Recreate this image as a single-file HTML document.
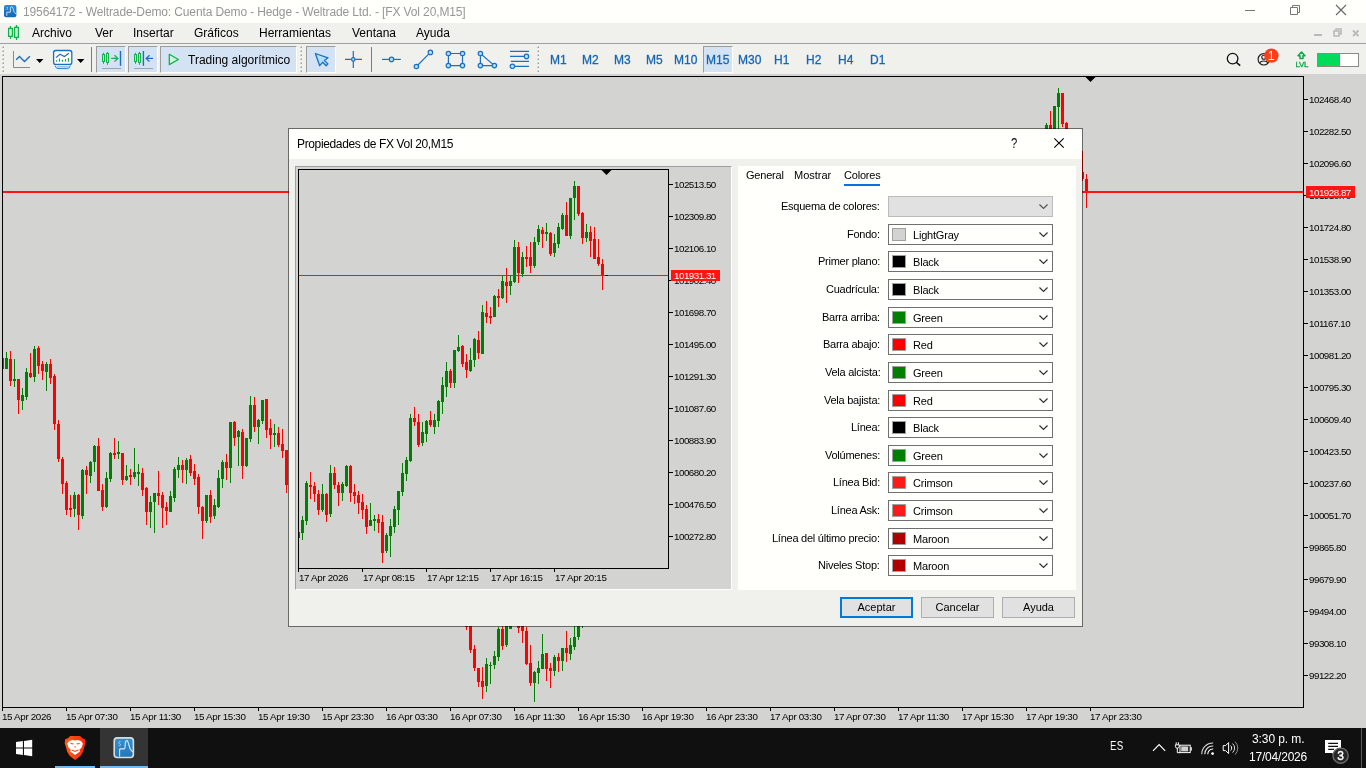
<!DOCTYPE html>
<html lang="es"><head><meta charset="utf-8"><title>MetaTrader 5</title>
<style>
*{margin:0;padding:0;box-sizing:border-box}
html,body{width:1366px;height:768px;overflow:hidden;background:#d3d3d1;font-family:"Liberation Sans",sans-serif;font-size:12px;color:#000}
body{position:relative}
i{display:block;font-style:normal}
.abs,#titlebar,#menubar,#toolbar,#chart,#dlg,#taskbar,#chart *,#dlg *,#taskbar *,#titlebar *,#menubar *,#toolbar *{position:absolute}
span{white-space:nowrap;line-height:1}
svg{display:block;overflow:visible}
#titlebar{left:0;top:0;width:1366px;height:23px;background:#fffffb}
#titlebar .tt{left:23px;top:6px;font-size:12px;color:#969696;letter-spacing:-0.125px}
#menubar{left:0;top:23px;width:1366px;height:20px;background:#f0f0ed}
#menubar span{top:4px;font-size:12px}
#sep1{position:absolute;left:0;top:43px;width:1366px;height:1px;background:#a0a0a0}
#toolbar{left:0;top:44px;width:1366px;height:30px;background:#f0f0ed}
#toolbar .hl{background:#d3e3f3;top:2px;height:27px;border:1px solid #fff;border-left-color:#9c9c9c;border-top-color:#9c9c9c}
#toolbar .tf{top:10px;font-size:12px;color:#1766b5;-webkit-text-stroke:0.3px #1766b5;margin-left:-0.6px}
#toolbar .grip{width:3px;top:3px;height:24px;background:repeating-linear-gradient(#f0f0ed 0 2px,#b8b8b8 2px 4px);opacity:.9}
#toolbar .vs{width:1px;top:3px;height:24px;background:#8a8a8a}
#chart{left:0;top:74px;width:1366px;height:654px;background:#d3d3d1;overflow:hidden}
/* chart children coordinates are page coords shifted by -74 via wrapper */
#cw{left:0;top:-74px;width:1366px;height:768px}
.tk{width:4px;height:1px;background:#000}
.tv{width:1px;height:3px;background:#000}
.pl,.tl{font-size:9.8px;letter-spacing:-0.5px;color:#000}
.tl{letter-spacing:-0.33px}
#dlg{left:288px;top:128px;width:795px;height:499px;background:#f0f0ed;background-clip:padding-box;border:1px solid rgba(0,0,0,.5);overflow:hidden}
#dw{left:-289px;top:-129px;width:1366px;height:768px}
#dtitle{left:289px;top:129px;width:793px;height:30px;background:#fffffb}
#dtitle .t{left:9px;top:9px;font-size:12px;letter-spacing:-0.36px}
#pvframe{left:295px;top:166px;width:437px;height:424px;background:#d3d3d1;border:1px solid #fff;border-top-color:#a0a0a0;border-left-color:#a0a0a0}
#pvbox{left:298px;top:169px;width:371px;height:400px;border:1px solid #000}
#panel{left:738px;top:166px;width:338px;height:424px;background:#fffffb}
.tab{top:170px;font-size:11px}
.lb{right:486px;font-size:11px;line-height:14px;letter-spacing:-0.25px}
.cb{left:888px;width:165px;height:21px;border:1px solid #707070;background:#fffffb}
.cb.dis{background:#e1e1e1;border-color:#bcbcbc}
.cb .sw{left:3px;top:3px;width:14px;height:13px;border:1px solid #a0a0a0}
.cb .cv{left:24px;top:5px;font-size:11px;letter-spacing:-0.2px}
.cb .chv{right:4px;top:7px;width:9px;height:5.4px}
.btn{top:597px;width:73px;height:21px;border:1px solid #adadad;background:#e1e1e1;font-size:11px;text-align:center;line-height:19px}
#taskbar{left:0;top:728px;width:1366px;height:40px;background:#101010}
#taskbar span{color:#fff}
span,text,.btn{will-change:transform}

</style></head>
<body>
<div id="titlebar">
<span class="tt">19564172 - Weltrade-Demo: Cuenta Demo - Hedge - Weltrade Ltd. - [FX Vol 20,M15]</span>
</div>
<div id="menubar">
<span style="left:32px">Archivo</span><span style="left:95px">Ver</span><span style="left:133px">Insertar</span><span style="left:194px">Gráficos</span><span style="left:259px">Herramientas</span><span style="left:352px">Ventana</span><span style="left:416px">Ayuda</span>
</div>
<div id="sep1"></div>
<div id="toolbar">
<i class="hl" style="left:96px;width:30px"></i><i class="hl" style="left:128px;width:30px"></i><i class="hl" style="left:160px;width:137px"></i><i class="hl" style="left:306px;width:30px"></i><i class="hl" style="left:703px;width:30px"></i>
<span style="left:188px;top:10px;font-size:12px">Trading algorítmico</span>
<span class="tf" style="left:551px">M1</span><span class="tf" style="left:583px">M2</span><span class="tf" style="left:615px">M3</span><span class="tf" style="left:647px">M5</span><span class="tf" style="left:675px">M10</span><span class="tf" style="left:707px">M15</span><span class="tf" style="left:739px">M30</span><span class="tf" style="left:775px">H1</span><span class="tf" style="left:807px">H2</span><span class="tf" style="left:839px">H4</span><span class="tf" style="left:871px">D1</span>
</div>
<svg id="topsvg" style="position:absolute;left:0;top:0" width="1366" height="76" viewBox="0 0 1366 76">
<defs><linearGradient id="gi" x1="0" y1="0" x2="0" y2="1"><stop offset="0" stop-color="#2a8ad6"/><stop offset="1" stop-color="#1666b0"/></linearGradient></defs>
<rect x="4" y="5" width="12.4" height="12.2" rx="2" fill="url(#gi)"/>
<path d="M6.8 15.8V12.2H10.4V8.6Q10.4 6.6 11.6 6.6Q12.6 6.6 13 8.4L14 11.6L16 14" fill="none" stroke="#d5e4f2" stroke-width="0.9"/>
<path d="M7.2 7V9.6M6.6 7.4H7.8M6.6 9.2H7.8" stroke="#d5e4f2" stroke-width="0.5" fill="none"/>
<path d="M1245 10.5H1255" stroke="#777" stroke-width="1"/>
<path d="M1290.5 7.5H1297.5V14.5H1290.5ZM1292.5 7.5V5.5H1299.5V12.5H1297.5" fill="none" stroke="#777" stroke-width="1"/>
<path d="M1336 5L1346 15M1346 5L1336 15" stroke="#666" stroke-width="1.1"/>
<rect x="1314" y="34" width="8" height="2" fill="#b9b9b9"/>
<path d="M1334 31H1339V36H1334ZM1336 30.5V29H1341V34H1339.5" fill="none" stroke="#b9b9b9" stroke-width="1.6"/>
<path d="M1353 30.5L1358.5 36M1358.5 30.5L1353 36" stroke="#b9b9b9" stroke-width="1.8"/>
<path d="M10.5 26V39M16.5 25V40" stroke="#14b04a" stroke-width="1.3"/>
<rect x="8.6" y="28.4" width="3.8" height="8" fill="#c6f7dc" stroke="#14b04a" stroke-width="1.3"/>
<rect x="14.6" y="27.4" width="3.8" height="10" fill="#c6f7dc" stroke="#14b04a" stroke-width="1.3"/>
<rect x="2" y="46" width="1" height="1" fill="#e6e6e2"/><rect x="3" y="46" width="1" height="1" fill="#c6c6c2"/><rect x="2" y="47" width="1" height="1" fill="#c6c6c2"/><rect x="3" y="47" width="1" height="1" fill="#a0a09c"/><rect x="2" y="50" width="1" height="1" fill="#e6e6e2"/><rect x="3" y="50" width="1" height="1" fill="#c6c6c2"/><rect x="2" y="51" width="1" height="1" fill="#c6c6c2"/><rect x="3" y="51" width="1" height="1" fill="#a0a09c"/><rect x="2" y="54" width="1" height="1" fill="#e6e6e2"/><rect x="3" y="54" width="1" height="1" fill="#c6c6c2"/><rect x="2" y="55" width="1" height="1" fill="#c6c6c2"/><rect x="3" y="55" width="1" height="1" fill="#a0a09c"/><rect x="2" y="58" width="1" height="1" fill="#e6e6e2"/><rect x="3" y="58" width="1" height="1" fill="#c6c6c2"/><rect x="2" y="59" width="1" height="1" fill="#c6c6c2"/><rect x="3" y="59" width="1" height="1" fill="#a0a09c"/><rect x="2" y="62" width="1" height="1" fill="#e6e6e2"/><rect x="3" y="62" width="1" height="1" fill="#c6c6c2"/><rect x="2" y="63" width="1" height="1" fill="#c6c6c2"/><rect x="3" y="63" width="1" height="1" fill="#a0a09c"/><rect x="2" y="66" width="1" height="1" fill="#e6e6e2"/><rect x="3" y="66" width="1" height="1" fill="#c6c6c2"/><rect x="2" y="67" width="1" height="1" fill="#c6c6c2"/><rect x="3" y="67" width="1" height="1" fill="#a0a09c"/><rect x="2" y="70" width="1" height="1" fill="#e6e6e2"/><rect x="3" y="70" width="1" height="1" fill="#c6c6c2"/><rect x="2" y="71" width="1" height="1" fill="#c6c6c2"/><rect x="3" y="71" width="1" height="1" fill="#a0a09c"/>
<rect x="300" y="46" width="1" height="1" fill="#e6e6e2"/><rect x="301" y="46" width="1" height="1" fill="#c6c6c2"/><rect x="300" y="47" width="1" height="1" fill="#c6c6c2"/><rect x="301" y="47" width="1" height="1" fill="#a0a09c"/><rect x="300" y="50" width="1" height="1" fill="#e6e6e2"/><rect x="301" y="50" width="1" height="1" fill="#c6c6c2"/><rect x="300" y="51" width="1" height="1" fill="#c6c6c2"/><rect x="301" y="51" width="1" height="1" fill="#a0a09c"/><rect x="300" y="54" width="1" height="1" fill="#e6e6e2"/><rect x="301" y="54" width="1" height="1" fill="#c6c6c2"/><rect x="300" y="55" width="1" height="1" fill="#c6c6c2"/><rect x="301" y="55" width="1" height="1" fill="#a0a09c"/><rect x="300" y="58" width="1" height="1" fill="#e6e6e2"/><rect x="301" y="58" width="1" height="1" fill="#c6c6c2"/><rect x="300" y="59" width="1" height="1" fill="#c6c6c2"/><rect x="301" y="59" width="1" height="1" fill="#a0a09c"/><rect x="300" y="62" width="1" height="1" fill="#e6e6e2"/><rect x="301" y="62" width="1" height="1" fill="#c6c6c2"/><rect x="300" y="63" width="1" height="1" fill="#c6c6c2"/><rect x="301" y="63" width="1" height="1" fill="#a0a09c"/><rect x="300" y="66" width="1" height="1" fill="#e6e6e2"/><rect x="301" y="66" width="1" height="1" fill="#c6c6c2"/><rect x="300" y="67" width="1" height="1" fill="#c6c6c2"/><rect x="301" y="67" width="1" height="1" fill="#a0a09c"/><rect x="300" y="70" width="1" height="1" fill="#e6e6e2"/><rect x="301" y="70" width="1" height="1" fill="#c6c6c2"/><rect x="300" y="71" width="1" height="1" fill="#c6c6c2"/><rect x="301" y="71" width="1" height="1" fill="#a0a09c"/>
<rect x="537" y="46" width="1" height="1" fill="#e6e6e2"/><rect x="538" y="46" width="1" height="1" fill="#c6c6c2"/><rect x="537" y="47" width="1" height="1" fill="#c6c6c2"/><rect x="538" y="47" width="1" height="1" fill="#a0a09c"/><rect x="537" y="50" width="1" height="1" fill="#e6e6e2"/><rect x="538" y="50" width="1" height="1" fill="#c6c6c2"/><rect x="537" y="51" width="1" height="1" fill="#c6c6c2"/><rect x="538" y="51" width="1" height="1" fill="#a0a09c"/><rect x="537" y="54" width="1" height="1" fill="#e6e6e2"/><rect x="538" y="54" width="1" height="1" fill="#c6c6c2"/><rect x="537" y="55" width="1" height="1" fill="#c6c6c2"/><rect x="538" y="55" width="1" height="1" fill="#a0a09c"/><rect x="537" y="58" width="1" height="1" fill="#e6e6e2"/><rect x="538" y="58" width="1" height="1" fill="#c6c6c2"/><rect x="537" y="59" width="1" height="1" fill="#c6c6c2"/><rect x="538" y="59" width="1" height="1" fill="#a0a09c"/><rect x="537" y="62" width="1" height="1" fill="#e6e6e2"/><rect x="538" y="62" width="1" height="1" fill="#c6c6c2"/><rect x="537" y="63" width="1" height="1" fill="#c6c6c2"/><rect x="538" y="63" width="1" height="1" fill="#a0a09c"/><rect x="537" y="66" width="1" height="1" fill="#e6e6e2"/><rect x="538" y="66" width="1" height="1" fill="#c6c6c2"/><rect x="537" y="67" width="1" height="1" fill="#c6c6c2"/><rect x="538" y="67" width="1" height="1" fill="#a0a09c"/><rect x="537" y="70" width="1" height="1" fill="#e6e6e2"/><rect x="538" y="70" width="1" height="1" fill="#c6c6c2"/><rect x="537" y="71" width="1" height="1" fill="#c6c6c2"/><rect x="538" y="71" width="1" height="1" fill="#a0a09c"/>
<path d="M13.5 51V67.5H30" fill="none" stroke="#8a8a8a" stroke-width="1"/>
<path d="M16.2 59.8L19.5 56.4L24.5 61.6L29.9 56.3" fill="none" stroke="#1b6fc2" stroke-width="1.4"/>
<path d="M36 59H43.4L39.7 63Z" fill="#000"/>
<rect x="53.6" y="50.5" width="18.2" height="14" rx="2.2" fill="#fff" stroke="#1b6fc2" stroke-width="1.3"/>
<path d="M55.2 65.6Q55.6 68.5 58 68.6H67.4Q69.8 68.5 70.2 65.6" fill="#fff" stroke="#1b6fc2" stroke-width="0.9"/><path d="M56.8 66.9H68.6" stroke="#1b6fc2" stroke-width="0.7"/>
<path d="M56 57.6L60 54.2L64.4 56.5L68.9 53.2" fill="none" stroke="#1b6fc2" stroke-width="1.2"/>
<path d="M56.5 61.8V60.2M59.5 61.8V58.4M62.4 61.8V59.8M65.5 61.8V59M68.4 61.8V58" stroke="#14b04a" stroke-width="1.2"/>
<path d="M77 59H84.4L80.7 63Z" fill="#000"/>
<rect x="91" y="47" width="1" height="25" fill="#7d7d7d"/><rect x="371" y="47" width="1" height="25" fill="#7d7d7d"/>
<path d="M103.5 52.8V63.8M107.5 51.9V64.9" stroke="#14b04a" stroke-width="1"/><rect x="102.5" y="54.5" width="2" height="7" fill="#c6f7dc" stroke="#14b04a" stroke-width="1"/><rect x="106.5" y="53.5" width="2" height="9" fill="#c6f7dc" stroke="#14b04a" stroke-width="1"/>
<path d="M111.2 58.4H117.6M114.5 55.2L117.8 58.4L114.5 61.6" fill="none" stroke="#14b04a" stroke-width="1.3"/>
<path d="M120.5 51V65.8" stroke="#1b6fc2" stroke-width="1.4"/>
<path d="M102 68.5H121" stroke="#a3a3a3" stroke-width="1"/>
<path d="M135.5 52.8V63.8M139.5 51.9V64.9" stroke="#14b04a" stroke-width="1"/><rect x="134.5" y="54.5" width="2" height="7" fill="#c6f7dc" stroke="#14b04a" stroke-width="1"/><rect x="138.5" y="53.5" width="2" height="9" fill="#c6f7dc" stroke="#14b04a" stroke-width="1"/>
<path d="M143.4 51V65.8" stroke="#1b6fc2" stroke-width="1.4"/>
<path d="M146.4 58.4H153M149.5 55.2L146.2 58.4L149.5 61.6" fill="none" stroke="#1b6fc2" stroke-width="1.3"/>
<path d="M134 68.5H153" stroke="#a3a3a3" stroke-width="1"/>
<path d="M169.3 54.3L178.4 59.5L169.3 64.6Z" fill="#c6f7dc" stroke="#14b04a" stroke-width="1.3" stroke-linejoin="round"/>
<path d="M315.4 53.5L328 57.8L324.4 60.5L327.9 63.9L326.2 65.7L322.6 62.3L319.7 65.7Z" fill="#b4e0ff" stroke="#1b6fc2" stroke-width="1.3" stroke-linejoin="round"/>
<path d="M345 59.4H362M353.3 51V68" stroke="#1b6fc2" stroke-width="1.2"/><circle cx="353.3" cy="59.4" r="1.7" fill="#b4e0ff" stroke="#1b6fc2" stroke-width="1.2"/>
<path d="M382 59.4H400.8" stroke="#1b6fc2" stroke-width="1.2"/><circle cx="391.5" cy="59.4" r="2.2" fill="#b4e0ff" stroke="#1b6fc2" stroke-width="1.2"/>
<path d="M416.4 66.5L430.4 52.4" stroke="#1b6fc2" stroke-width="1.2"/><circle cx="416.4" cy="66.5" r="2.2" fill="#b4e0ff" stroke="#1b6fc2" stroke-width="1.2"/><circle cx="430.4" cy="52.4" r="2.2" fill="#b4e0ff" stroke="#1b6fc2" stroke-width="1.2"/>
<path d="M448.4 53.5H462.5V65.6H448.4Z" fill="none" stroke="#1b6fc2" stroke-width="1.2"/><circle cx="448.4" cy="53.5" r="2.2" fill="#b4e0ff" stroke="#1b6fc2" stroke-width="1.2"/><circle cx="462.5" cy="53.5" r="2.2" fill="#b4e0ff" stroke="#1b6fc2" stroke-width="1.2"/><circle cx="448.4" cy="65.6" r="2.2" fill="#b4e0ff" stroke="#1b6fc2" stroke-width="1.2"/><circle cx="462.5" cy="65.6" r="2.2" fill="#b4e0ff" stroke="#1b6fc2" stroke-width="1.2"/>
<path d="M480.4 53.5V65.6H494.4Z" fill="none" stroke="#1b6fc2" stroke-width="1.2"/><circle cx="480.4" cy="53.5" r="2.2" fill="#b4e0ff" stroke="#1b6fc2" stroke-width="1.2"/><circle cx="480.4" cy="65.6" r="2.2" fill="#b4e0ff" stroke="#1b6fc2" stroke-width="1.2"/><circle cx="494.4" cy="65.6" r="2.2" fill="#b4e0ff" stroke="#1b6fc2" stroke-width="1.2"/>
<path d="M510 51.3H529M510 56.4H525M510.8 61.4H529M514 66.3H529" stroke="#1b6fc2" stroke-width="1.2"/><circle cx="526.5" cy="56.4" r="2.2" fill="#b4e0ff" stroke="#1b6fc2" stroke-width="1.2"/><circle cx="512.4" cy="66.3" r="2.2" fill="#b4e0ff" stroke="#1b6fc2" stroke-width="1.2"/>
<circle cx="1232.6" cy="58.6" r="5.3" fill="none" stroke="#111" stroke-width="1.3"/><path d="M1236.4 62.4L1240.2 65.6" stroke="#111" stroke-width="1.5"/>
<circle cx="1263.8" cy="59.3" r="5.7" fill="none" stroke="#222" stroke-width="1.2"/><circle cx="1263.8" cy="57.2" r="2" fill="none" stroke="#222" stroke-width="1.1"/><path d="M1259.6 63C1261 60.4 1266.6 60.4 1268 63" fill="none" stroke="#222" stroke-width="1.1"/>
<circle cx="1271.4" cy="55.6" r="7.2" fill="#ff3d17"/><text x="1271.2" y="60" font-size="12.5" fill="#fff" text-anchor="middle" font-family="Liberation Sans, sans-serif">1</text>
<path d="M1301.5 52L1305 55.8H1303V58.4H1300V55.8H1298Z" fill="#d8f7e4" stroke="#12a84a" stroke-width="1.5" stroke-linejoin="round"/>
<text x="1301.8" y="66.7" font-size="8" fill="#12a84a" stroke="#12a84a" stroke-width="0.35" text-anchor="middle" font-family="Liberation Sans, sans-serif" letter-spacing="-0.3">LVL</text>
<rect x="1317.5" y="53.5" width="41" height="13" fill="#fffffb" stroke="#8a8a8a" stroke-width="1"/><rect x="1318" y="54" width="22" height="12" fill="#00dc5a"/>
</svg>
<div id="chart"><div id="cw">
<svg style="left:0;top:0" width="1366" height="768" shape-rendering="crispEdges"><rect x="3" y="358" width="1" height="11" fill="#ff0000"/><rect x="6" y="352" width="1" height="17" fill="#008000"/><rect x="5" y="358" width="3" height="11" fill="#008000"/><rect x="10" y="351" width="1" height="35" fill="#ff0000"/><rect x="9" y="359" width="3" height="22" fill="#ff0000"/><rect x="14" y="359" width="1" height="28" fill="#008000"/><rect x="13" y="379" width="3" height="2" fill="#008000"/><rect x="18" y="379" width="1" height="35" fill="#ff0000"/><rect x="17" y="379" width="3" height="21" fill="#ff0000"/><rect x="22" y="388" width="1" height="22" fill="#008000"/><rect x="21" y="395" width="3" height="6" fill="#008000"/><rect x="26" y="368" width="1" height="32" fill="#008000"/><rect x="25" y="372" width="3" height="25" fill="#008000"/><rect x="30" y="353" width="1" height="25" fill="#ff0000"/><rect x="29" y="373" width="3" height="4" fill="#ff0000"/><rect x="34" y="346" width="1" height="36" fill="#008000"/><rect x="33" y="349" width="3" height="28" fill="#008000"/><rect x="38" y="346" width="1" height="28" fill="#ff0000"/><rect x="37" y="348" width="3" height="18" fill="#ff0000"/><rect x="42" y="361" width="1" height="19" fill="#ff0000"/><rect x="41" y="364" width="3" height="7" fill="#ff0000"/><rect x="46" y="362" width="1" height="29" fill="#008000"/><rect x="45" y="364" width="3" height="8" fill="#008000"/><rect x="50" y="359" width="1" height="25" fill="#ff0000"/><rect x="49" y="364" width="3" height="14" fill="#ff0000"/><rect x="54" y="374" width="1" height="56" fill="#ff0000"/><rect x="53" y="376" width="3" height="48" fill="#ff0000"/><rect x="58" y="420" width="1" height="42" fill="#ff0000"/><rect x="57" y="424" width="3" height="35" fill="#ff0000"/><rect x="62" y="457" width="1" height="37" fill="#ff0000"/><rect x="61" y="459" width="3" height="25" fill="#ff0000"/><rect x="66" y="481" width="1" height="34" fill="#ff0000"/><rect x="65" y="483" width="3" height="27" fill="#ff0000"/><rect x="70" y="495" width="1" height="22" fill="#ff0000"/><rect x="69" y="508" width="3" height="2" fill="#ff0000"/><rect x="74" y="492" width="1" height="25" fill="#008000"/><rect x="73" y="495" width="3" height="14" fill="#008000"/><rect x="78" y="494" width="1" height="36" fill="#ff0000"/><rect x="77" y="495" width="3" height="20" fill="#ff0000"/><rect x="82" y="469" width="1" height="50" fill="#008000"/><rect x="81" y="470" width="3" height="46" fill="#008000"/><rect x="86" y="466" width="1" height="28" fill="#ff0000"/><rect x="85" y="470" width="3" height="5" fill="#ff0000"/><rect x="90" y="461" width="1" height="22" fill="#008000"/><rect x="89" y="462" width="3" height="14" fill="#008000"/><rect x="94" y="445" width="1" height="27" fill="#008000"/><rect x="93" y="446" width="3" height="16" fill="#008000"/><rect x="98" y="438" width="1" height="53" fill="#ff0000"/><rect x="97" y="446" width="3" height="45" fill="#ff0000"/><rect x="102" y="484" width="1" height="27" fill="#ff0000"/><rect x="101" y="490" width="3" height="17" fill="#ff0000"/><rect x="106" y="472" width="1" height="36" fill="#008000"/><rect x="105" y="478" width="3" height="29" fill="#008000"/><rect x="110" y="452" width="1" height="30" fill="#008000"/><rect x="109" y="453" width="3" height="26" fill="#008000"/><rect x="114" y="438" width="1" height="21" fill="#ff0000"/><rect x="113" y="453" width="3" height="2" fill="#ff0000"/><rect x="118" y="441" width="1" height="18" fill="#008000"/><rect x="117" y="452" width="3" height="2" fill="#008000"/><rect x="122" y="453" width="1" height="32" fill="#ff0000"/><rect x="121" y="453" width="3" height="27" fill="#ff0000"/><rect x="126" y="465" width="1" height="16" fill="#008000"/><rect x="125" y="476" width="3" height="4" fill="#008000"/><rect x="130" y="469" width="1" height="16" fill="#ff0000"/><rect x="129" y="475" width="3" height="2" fill="#ff0000"/><rect x="134" y="448" width="1" height="31" fill="#008000"/><rect x="133" y="472" width="3" height="5" fill="#008000"/><rect x="138" y="464" width="1" height="22" fill="#008000"/><rect x="137" y="472" width="3" height="2" fill="#008000"/><rect x="142" y="468" width="1" height="28" fill="#ff0000"/><rect x="141" y="473" width="3" height="17" fill="#ff0000"/><rect x="146" y="487" width="1" height="38" fill="#ff0000"/><rect x="145" y="488" width="3" height="24" fill="#ff0000"/><rect x="150" y="496" width="1" height="32" fill="#008000"/><rect x="149" y="502" width="3" height="10" fill="#008000"/><rect x="154" y="493" width="1" height="40" fill="#008000"/><rect x="153" y="493" width="3" height="9" fill="#008000"/><rect x="158" y="471" width="1" height="34" fill="#ff0000"/><rect x="157" y="493" width="3" height="3" fill="#ff0000"/><rect x="162" y="492" width="1" height="36" fill="#ff0000"/><rect x="161" y="495" width="3" height="13" fill="#ff0000"/><rect x="166" y="502" width="1" height="23" fill="#ff0000"/><rect x="165" y="507" width="3" height="4" fill="#ff0000"/><rect x="170" y="491" width="1" height="21" fill="#008000"/><rect x="169" y="496" width="3" height="16" fill="#008000"/><rect x="174" y="467" width="1" height="35" fill="#008000"/><rect x="173" y="469" width="3" height="29" fill="#008000"/><rect x="178" y="457" width="1" height="21" fill="#008000"/><rect x="177" y="465" width="3" height="5" fill="#008000"/><rect x="182" y="460" width="1" height="23" fill="#ff0000"/><rect x="181" y="465" width="3" height="5" fill="#ff0000"/><rect x="186" y="458" width="1" height="26" fill="#008000"/><rect x="185" y="460" width="3" height="10" fill="#008000"/><rect x="190" y="455" width="1" height="21" fill="#ff0000"/><rect x="189" y="459" width="3" height="14" fill="#ff0000"/><rect x="194" y="464" width="1" height="21" fill="#ff0000"/><rect x="193" y="471" width="3" height="8" fill="#ff0000"/><rect x="198" y="474" width="1" height="40" fill="#ff0000"/><rect x="197" y="477" width="3" height="30" fill="#ff0000"/><rect x="202" y="506" width="1" height="33" fill="#ff0000"/><rect x="201" y="507" width="3" height="14" fill="#ff0000"/><rect x="206" y="495" width="1" height="28" fill="#008000"/><rect x="205" y="495" width="3" height="26" fill="#008000"/><rect x="210" y="490" width="1" height="33" fill="#ff0000"/><rect x="209" y="495" width="3" height="22" fill="#ff0000"/><rect x="214" y="499" width="1" height="20" fill="#008000"/><rect x="213" y="505" width="3" height="11" fill="#008000"/><rect x="218" y="470" width="1" height="38" fill="#008000"/><rect x="217" y="478" width="3" height="29" fill="#008000"/><rect x="222" y="460" width="1" height="28" fill="#008000"/><rect x="221" y="462" width="3" height="17" fill="#008000"/><rect x="226" y="454" width="1" height="26" fill="#ff0000"/><rect x="225" y="462" width="3" height="6" fill="#ff0000"/><rect x="230" y="422" width="1" height="61" fill="#008000"/><rect x="229" y="422" width="3" height="46" fill="#008000"/><rect x="234" y="421" width="1" height="25" fill="#ff0000"/><rect x="233" y="422" width="3" height="16" fill="#ff0000"/><rect x="238" y="430" width="1" height="36" fill="#008000"/><rect x="237" y="431" width="3" height="6" fill="#008000"/><rect x="242" y="429" width="1" height="50" fill="#ff0000"/><rect x="241" y="432" width="3" height="34" fill="#ff0000"/><rect x="246" y="438" width="1" height="29" fill="#008000"/><rect x="245" y="438" width="3" height="28" fill="#008000"/><rect x="250" y="396" width="1" height="46" fill="#008000"/><rect x="249" y="405" width="3" height="34" fill="#008000"/><rect x="254" y="397" width="1" height="35" fill="#ff0000"/><rect x="253" y="405" width="3" height="22" fill="#ff0000"/><rect x="258" y="419" width="1" height="25" fill="#008000"/><rect x="257" y="420" width="3" height="7" fill="#008000"/><rect x="262" y="400" width="1" height="24" fill="#008000"/><rect x="261" y="400" width="3" height="21" fill="#008000"/><rect x="266" y="399" width="1" height="39" fill="#ff0000"/><rect x="265" y="399" width="3" height="31" fill="#ff0000"/><rect x="270" y="419" width="1" height="30" fill="#ff0000"/><rect x="269" y="428" width="3" height="7" fill="#ff0000"/><rect x="274" y="424" width="1" height="23" fill="#008000"/><rect x="273" y="433" width="3" height="2" fill="#008000"/><rect x="278" y="427" width="1" height="20" fill="#ff0000"/><rect x="277" y="433" width="3" height="12" fill="#ff0000"/><rect x="282" y="429" width="1" height="29" fill="#ff0000"/><rect x="281" y="444" width="3" height="7" fill="#ff0000"/><rect x="286" y="450" width="1" height="43" fill="#ff0000"/><rect x="285" y="450" width="3" height="35" fill="#ff0000"/><rect x="466" y="590" width="1" height="40" fill="#ff0000"/><rect x="465" y="590" width="3" height="37" fill="#ff0000"/><rect x="470" y="600" width="1" height="53" fill="#ff0000"/><rect x="469" y="600" width="3" height="50" fill="#ff0000"/><rect x="474" y="645" width="1" height="26" fill="#ff0000"/><rect x="473" y="649" width="3" height="19" fill="#ff0000"/><rect x="478" y="668" width="1" height="19" fill="#ff0000"/><rect x="477" y="668" width="3" height="14" fill="#ff0000"/><rect x="482" y="667" width="1" height="32" fill="#ff0000"/><rect x="481" y="681" width="3" height="6" fill="#ff0000"/><rect x="486" y="658" width="1" height="34" fill="#008000"/><rect x="485" y="664" width="3" height="22" fill="#008000"/><rect x="490" y="662" width="1" height="22" fill="#008000"/><rect x="489" y="665" width="3" height="1" fill="#008000"/><rect x="494" y="651" width="1" height="18" fill="#008000"/><rect x="493" y="656" width="3" height="9" fill="#008000"/><rect x="498" y="627" width="1" height="34" fill="#008000"/><rect x="497" y="629" width="3" height="28" fill="#008000"/><rect x="502" y="626" width="1" height="24" fill="#ff0000"/><rect x="501" y="629" width="3" height="17" fill="#ff0000"/><rect x="506" y="600" width="1" height="47" fill="#008000"/><rect x="505" y="605" width="3" height="40" fill="#008000"/><rect x="510" y="590" width="1" height="39" fill="#008000"/><rect x="509" y="595" width="3" height="34" fill="#008000"/><rect x="518" y="600" width="1" height="33" fill="#ff0000"/><rect x="517" y="605" width="3" height="23" fill="#ff0000"/><rect x="522" y="600" width="1" height="43" fill="#ff0000"/><rect x="521" y="610" width="3" height="21" fill="#ff0000"/><rect x="526" y="627" width="1" height="38" fill="#ff0000"/><rect x="525" y="631" width="3" height="33" fill="#ff0000"/><rect x="530" y="645" width="1" height="41" fill="#ff0000"/><rect x="529" y="663" width="3" height="20" fill="#ff0000"/><rect x="534" y="671" width="1" height="31" fill="#008000"/><rect x="533" y="672" width="3" height="11" fill="#008000"/><rect x="538" y="661" width="1" height="23" fill="#008000"/><rect x="537" y="668" width="3" height="5" fill="#008000"/><rect x="542" y="634" width="1" height="35" fill="#008000"/><rect x="541" y="654" width="3" height="15" fill="#008000"/><rect x="546" y="653" width="1" height="28" fill="#ff0000"/><rect x="545" y="653" width="3" height="16" fill="#ff0000"/><rect x="550" y="663" width="1" height="25" fill="#ff0000"/><rect x="549" y="668" width="3" height="3" fill="#ff0000"/><rect x="554" y="655" width="1" height="21" fill="#008000"/><rect x="553" y="657" width="3" height="14" fill="#008000"/><rect x="558" y="653" width="1" height="19" fill="#ff0000"/><rect x="557" y="657" width="3" height="4" fill="#ff0000"/><rect x="562" y="648" width="1" height="23" fill="#008000"/><rect x="561" y="648" width="3" height="13" fill="#008000"/><rect x="566" y="631" width="1" height="31" fill="#ff0000"/><rect x="565" y="648" width="3" height="5" fill="#ff0000"/><rect x="570" y="638" width="1" height="22" fill="#008000"/><rect x="569" y="645" width="3" height="9" fill="#008000"/><rect x="574" y="626" width="1" height="24" fill="#008000"/><rect x="573" y="637" width="3" height="10" fill="#008000"/><rect x="578" y="600" width="1" height="40" fill="#008000"/><rect x="577" y="610" width="3" height="27" fill="#008000"/><rect x="582" y="600" width="1" height="28" fill="#008000"/><rect x="581" y="605" width="3" height="16" fill="#008000"/><rect x="1046" y="123" width="1" height="18" fill="#008000"/><rect x="1045" y="125" width="3" height="16" fill="#008000"/><rect x="1050" y="111" width="1" height="30" fill="#ff0000"/><rect x="1049" y="125" width="3" height="16" fill="#ff0000"/><rect x="1054" y="106" width="1" height="35" fill="#008000"/><rect x="1053" y="106" width="3" height="35" fill="#008000"/><rect x="1058" y="88" width="1" height="53" fill="#008000"/><rect x="1057" y="93" width="3" height="14" fill="#008000"/><rect x="1062" y="93" width="1" height="34" fill="#ff0000"/><rect x="1061" y="93" width="3" height="31" fill="#ff0000"/><rect x="1066" y="122" width="1" height="29" fill="#ff0000"/><rect x="1065" y="123" width="3" height="28" fill="#ff0000"/><rect x="1082" y="151" width="1" height="30" fill="#ff0000"/><rect x="1082" y="172" width="2" height="7" fill="#ff0000"/><rect x="1086" y="174" width="1" height="34" fill="#ff0000"/><rect x="1085" y="179" width="3" height="14" fill="#ff0000"/></svg>
<i style="left:3px;top:191px;width:1300px;height:2px;background:#ff1414"></i>
<i style="left:2px;top:76px;width:1302px;height:1px;background:#000"></i>
<i style="left:2px;top:76px;width:1px;height:632px;background:#000"></i>
<i style="left:1303px;top:76px;width:1px;height:632px;background:#000"></i>
<i style="left:2px;top:707px;width:1302px;height:1px;background:#000"></i>
<svg style="left:1085px;top:77px" width="11" height="6" viewBox="0 0 11 6"><path d="M0.5 0H10.5L5.5 5Z" fill="#000"/></svg>
<i class="tk" style="left:1304px;top:99px"></i><span class="pl" style="left:1309px;top:95px">102468.40</span><i class="tk" style="left:1304px;top:131px"></i><span class="pl" style="left:1309px;top:127px">102282.50</span><i class="tk" style="left:1304px;top:163px"></i><span class="pl" style="left:1309px;top:159px">102096.60</span><i class="tk" style="left:1304px;top:195px"></i><span class="pl" style="left:1309px;top:191px">101910.70</span><i class="tk" style="left:1304px;top:227px"></i><span class="pl" style="left:1309px;top:223px">101724.80</span><i class="tk" style="left:1304px;top:259px"></i><span class="pl" style="left:1309px;top:255px">101538.90</span><i class="tk" style="left:1304px;top:291px"></i><span class="pl" style="left:1309px;top:287px">101353.00</span><i class="tk" style="left:1304px;top:323px"></i><span class="pl" style="left:1309px;top:319px">101167.10</span><i class="tk" style="left:1304px;top:355px"></i><span class="pl" style="left:1309px;top:351px">100981.20</span><i class="tk" style="left:1304px;top:387px"></i><span class="pl" style="left:1309px;top:383px">100795.30</span><i class="tk" style="left:1304px;top:419px"></i><span class="pl" style="left:1309px;top:415px">100609.40</span><i class="tk" style="left:1304px;top:451px"></i><span class="pl" style="left:1309px;top:447px">100423.50</span><i class="tk" style="left:1304px;top:483px"></i><span class="pl" style="left:1309px;top:479px">100237.60</span><i class="tk" style="left:1304px;top:515px"></i><span class="pl" style="left:1309px;top:511px">100051.70</span><i class="tk" style="left:1304px;top:547px"></i><span class="pl" style="left:1309px;top:543px">99865.80</span><i class="tk" style="left:1304px;top:579px"></i><span class="pl" style="left:1309px;top:575px">99679.90</span><i class="tk" style="left:1304px;top:611px"></i><span class="pl" style="left:1309px;top:607px">99494.00</span><i class="tk" style="left:1304px;top:643px"></i><span class="pl" style="left:1309px;top:639px">99308.10</span><i class="tk" style="left:1304px;top:675px"></i><span class="pl" style="left:1309px;top:671px">99122.20</span>
<i class="tv" style="left:2px;top:708px"></i><span class="tl" style="left:2px;top:712px">15 Apr 2026</span><i class="tv" style="left:66px;top:708px"></i><span class="tl" style="left:66px;top:712px">15 Apr 07:30</span><i class="tv" style="left:130px;top:708px"></i><span class="tl" style="left:130px;top:712px">15 Apr 11:30</span><i class="tv" style="left:194px;top:708px"></i><span class="tl" style="left:194px;top:712px">15 Apr 15:30</span><i class="tv" style="left:258px;top:708px"></i><span class="tl" style="left:258px;top:712px">15 Apr 19:30</span><i class="tv" style="left:322px;top:708px"></i><span class="tl" style="left:322px;top:712px">15 Apr 23:30</span><i class="tv" style="left:386px;top:708px"></i><span class="tl" style="left:386px;top:712px">16 Apr 03:30</span><i class="tv" style="left:450px;top:708px"></i><span class="tl" style="left:450px;top:712px">16 Apr 07:30</span><i class="tv" style="left:514px;top:708px"></i><span class="tl" style="left:514px;top:712px">16 Apr 11:30</span><i class="tv" style="left:578px;top:708px"></i><span class="tl" style="left:578px;top:712px">16 Apr 15:30</span><i class="tv" style="left:642px;top:708px"></i><span class="tl" style="left:642px;top:712px">16 Apr 19:30</span><i class="tv" style="left:706px;top:708px"></i><span class="tl" style="left:706px;top:712px">16 Apr 23:30</span><i class="tv" style="left:770px;top:708px"></i><span class="tl" style="left:770px;top:712px">17 Apr 03:30</span><i class="tv" style="left:834px;top:708px"></i><span class="tl" style="left:834px;top:712px">17 Apr 07:30</span><i class="tv" style="left:898px;top:708px"></i><span class="tl" style="left:898px;top:712px">17 Apr 11:30</span><i class="tv" style="left:962px;top:708px"></i><span class="tl" style="left:962px;top:712px">17 Apr 15:30</span><i class="tv" style="left:1026px;top:708px"></i><span class="tl" style="left:1026px;top:712px">17 Apr 19:30</span><i class="tv" style="left:1090px;top:708px"></i><span class="tl" style="left:1090px;top:712px">17 Apr 23:30</span>
<i style="left:1306px;top:186px;width:49px;height:12px;background:#ff1414"></i><span class="pl" style="left:1309px;top:188px;color:#fff">101928.87</span>
</div></div>
<div id="dlg"><div id="dw">
<div id="dtitle"><span class="t" style="left:8.4px">Propiedades de FX Vol 20,M15</span><span style="left:722px;top:7px;font-size:14px;transform:scaleX(.8);transform-origin:0 0">?</span><svg style="left:765px;top:9px" width="10" height="10" viewBox="0 0 10 10"><path d="M0.3 0.3L9.7 9.7M9.7 0.3L0.3 9.7" stroke="#000" stroke-width="1.1"/></svg></div>
<div id="pvframe"></div>
<svg style="left:0;top:0" width="1366" height="768" shape-rendering="crispEdges"><rect x="299" y="532" width="1" height="6" fill="#008000"/><rect x="302" y="516" width="1" height="24" fill="#008000"/><rect x="301" y="520" width="3" height="13" fill="#008000"/><rect x="306" y="481" width="1" height="44" fill="#008000"/><rect x="305" y="483" width="3" height="38" fill="#008000"/><rect x="310" y="472" width="1" height="27" fill="#ff0000"/><rect x="309" y="485" width="3" height="2" fill="#ff0000"/><rect x="314" y="482" width="1" height="20" fill="#ff0000"/><rect x="313" y="486" width="3" height="8" fill="#ff0000"/><rect x="318" y="490" width="1" height="25" fill="#ff0000"/><rect x="317" y="494" width="3" height="16" fill="#ff0000"/><rect x="322" y="484" width="1" height="28" fill="#008000"/><rect x="321" y="494" width="3" height="16" fill="#008000"/><rect x="326" y="493" width="1" height="29" fill="#ff0000"/><rect x="325" y="494" width="3" height="21" fill="#ff0000"/><rect x="330" y="465" width="1" height="52" fill="#008000"/><rect x="329" y="473" width="3" height="41" fill="#008000"/><rect x="334" y="467" width="1" height="22" fill="#ff0000"/><rect x="333" y="473" width="3" height="12" fill="#ff0000"/><rect x="338" y="482" width="1" height="24" fill="#ff0000"/><rect x="337" y="485" width="3" height="8" fill="#ff0000"/><rect x="342" y="482" width="1" height="19" fill="#008000"/><rect x="341" y="484" width="3" height="9" fill="#008000"/><rect x="346" y="465" width="1" height="22" fill="#008000"/><rect x="345" y="466" width="3" height="20" fill="#008000"/><rect x="350" y="465" width="1" height="37" fill="#ff0000"/><rect x="349" y="466" width="3" height="27" fill="#ff0000"/><rect x="354" y="484" width="1" height="20" fill="#ff0000"/><rect x="353" y="492" width="3" height="4" fill="#ff0000"/><rect x="358" y="491" width="1" height="23" fill="#ff0000"/><rect x="357" y="495" width="3" height="8" fill="#ff0000"/><rect x="362" y="494" width="1" height="25" fill="#ff0000"/><rect x="361" y="502" width="3" height="8" fill="#ff0000"/><rect x="366" y="505" width="1" height="29" fill="#ff0000"/><rect x="365" y="509" width="3" height="18" fill="#ff0000"/><rect x="370" y="503" width="1" height="23" fill="#008000"/><rect x="369" y="520" width="3" height="6" fill="#008000"/><rect x="374" y="515" width="1" height="16" fill="#008000"/><rect x="373" y="519" width="3" height="2" fill="#008000"/><rect x="378" y="514" width="1" height="19" fill="#ff0000"/><rect x="377" y="519" width="3" height="4" fill="#ff0000"/><rect x="382" y="515" width="1" height="48" fill="#ff0000"/><rect x="381" y="522" width="3" height="31" fill="#ff0000"/><rect x="386" y="533" width="1" height="20" fill="#008000"/><rect x="385" y="535" width="3" height="16" fill="#008000"/><rect x="390" y="519" width="1" height="38" fill="#008000"/><rect x="389" y="526" width="3" height="10" fill="#008000"/><rect x="394" y="506" width="1" height="27" fill="#008000"/><rect x="393" y="509" width="3" height="18" fill="#008000"/><rect x="398" y="491" width="1" height="34" fill="#008000"/><rect x="397" y="491" width="3" height="19" fill="#008000"/><rect x="402" y="463" width="1" height="33" fill="#008000"/><rect x="401" y="473" width="3" height="19" fill="#008000"/><rect x="406" y="457" width="1" height="24" fill="#008000"/><rect x="405" y="460" width="3" height="14" fill="#008000"/><rect x="410" y="414" width="1" height="48" fill="#008000"/><rect x="409" y="418" width="3" height="43" fill="#008000"/><rect x="414" y="407" width="1" height="19" fill="#ff0000"/><rect x="413" y="418" width="3" height="4" fill="#ff0000"/><rect x="418" y="414" width="1" height="33" fill="#ff0000"/><rect x="417" y="422" width="3" height="23" fill="#ff0000"/><rect x="422" y="422" width="1" height="24" fill="#008000"/><rect x="421" y="432" width="3" height="11" fill="#008000"/><rect x="426" y="420" width="1" height="22" fill="#008000"/><rect x="425" y="421" width="3" height="13" fill="#008000"/><rect x="430" y="411" width="1" height="16" fill="#ff0000"/><rect x="429" y="420" width="3" height="5" fill="#ff0000"/><rect x="434" y="414" width="1" height="20" fill="#008000"/><rect x="433" y="420" width="3" height="7" fill="#008000"/><rect x="438" y="400" width="1" height="27" fill="#008000"/><rect x="437" y="401" width="3" height="20" fill="#008000"/><rect x="442" y="377" width="1" height="37" fill="#008000"/><rect x="441" y="385" width="3" height="17" fill="#008000"/><rect x="446" y="362" width="1" height="35" fill="#008000"/><rect x="445" y="371" width="3" height="16" fill="#008000"/><rect x="450" y="369" width="1" height="19" fill="#ff0000"/><rect x="449" y="371" width="3" height="12" fill="#ff0000"/><rect x="454" y="350" width="1" height="38" fill="#008000"/><rect x="453" y="350" width="3" height="33" fill="#008000"/><rect x="458" y="335" width="1" height="17" fill="#008000"/><rect x="457" y="347" width="3" height="4" fill="#008000"/><rect x="462" y="345" width="1" height="22" fill="#ff0000"/><rect x="461" y="346" width="3" height="18" fill="#ff0000"/><rect x="466" y="354" width="1" height="24" fill="#ff0000"/><rect x="465" y="362" width="3" height="8" fill="#ff0000"/><rect x="470" y="348" width="1" height="24" fill="#008000"/><rect x="469" y="360" width="3" height="11" fill="#008000"/><rect x="474" y="338" width="1" height="29" fill="#008000"/><rect x="473" y="339" width="3" height="21" fill="#008000"/><rect x="478" y="331" width="1" height="28" fill="#ff0000"/><rect x="477" y="340" width="3" height="13" fill="#ff0000"/><rect x="482" y="305" width="1" height="49" fill="#008000"/><rect x="481" y="312" width="3" height="42" fill="#008000"/><rect x="486" y="301" width="1" height="22" fill="#ff0000"/><rect x="485" y="313" width="3" height="4" fill="#ff0000"/><rect x="490" y="307" width="1" height="17" fill="#ff0000"/><rect x="489" y="316" width="3" height="2" fill="#ff0000"/><rect x="494" y="295" width="1" height="22" fill="#008000"/><rect x="493" y="296" width="3" height="21" fill="#008000"/><rect x="498" y="289" width="1" height="18" fill="#ff0000"/><rect x="497" y="296" width="3" height="2" fill="#ff0000"/><rect x="502" y="275" width="1" height="24" fill="#008000"/><rect x="501" y="281" width="3" height="17" fill="#008000"/><rect x="506" y="268" width="1" height="35" fill="#ff0000"/><rect x="505" y="282" width="3" height="4" fill="#ff0000"/><rect x="510" y="275" width="1" height="20" fill="#008000"/><rect x="509" y="281" width="3" height="5" fill="#008000"/><rect x="514" y="240" width="1" height="43" fill="#008000"/><rect x="513" y="247" width="3" height="35" fill="#008000"/><rect x="518" y="242" width="1" height="41" fill="#ff0000"/><rect x="517" y="247" width="3" height="26" fill="#ff0000"/><rect x="522" y="252" width="1" height="25" fill="#008000"/><rect x="521" y="257" width="3" height="17" fill="#008000"/><rect x="526" y="246" width="1" height="21" fill="#ff0000"/><rect x="525" y="257" width="3" height="2" fill="#ff0000"/><rect x="530" y="242" width="1" height="31" fill="#ff0000"/><rect x="529" y="257" width="3" height="9" fill="#ff0000"/><rect x="534" y="237" width="1" height="31" fill="#008000"/><rect x="533" y="242" width="3" height="24" fill="#008000"/><rect x="538" y="225" width="1" height="20" fill="#008000"/><rect x="537" y="229" width="3" height="13" fill="#008000"/><rect x="542" y="227" width="1" height="21" fill="#ff0000"/><rect x="541" y="230" width="3" height="4" fill="#ff0000"/><rect x="546" y="223" width="1" height="18" fill="#008000"/><rect x="545" y="232" width="3" height="2" fill="#008000"/><rect x="550" y="232" width="1" height="24" fill="#ff0000"/><rect x="549" y="233" width="3" height="21" fill="#ff0000"/><rect x="554" y="234" width="1" height="23" fill="#008000"/><rect x="553" y="243" width="3" height="10" fill="#008000"/><rect x="558" y="223" width="1" height="25" fill="#008000"/><rect x="557" y="227" width="3" height="17" fill="#008000"/><rect x="562" y="213" width="1" height="17" fill="#008000"/><rect x="561" y="215" width="3" height="14" fill="#008000"/><rect x="566" y="202" width="1" height="34" fill="#ff0000"/><rect x="565" y="215" width="3" height="21" fill="#ff0000"/><rect x="570" y="198" width="1" height="41" fill="#008000"/><rect x="569" y="198" width="3" height="38" fill="#008000"/><rect x="574" y="181" width="1" height="39" fill="#008000"/><rect x="573" y="186" width="3" height="12" fill="#008000"/><rect x="578" y="186" width="1" height="30" fill="#ff0000"/><rect x="577" y="186" width="3" height="28" fill="#ff0000"/><rect x="582" y="212" width="1" height="32" fill="#ff0000"/><rect x="581" y="213" width="3" height="25" fill="#ff0000"/><rect x="586" y="224" width="1" height="18" fill="#008000"/><rect x="585" y="232" width="3" height="6" fill="#008000"/><rect x="590" y="226" width="1" height="31" fill="#ff0000"/><rect x="589" y="232" width="3" height="9" fill="#ff0000"/><rect x="594" y="227" width="1" height="32" fill="#ff0000"/><rect x="593" y="239" width="3" height="20" fill="#ff0000"/><rect x="598" y="239" width="1" height="27" fill="#ff0000"/><rect x="597" y="257" width="3" height="7" fill="#ff0000"/><rect x="602" y="259" width="1" height="31" fill="#ff0000"/><rect x="601" y="264" width="3" height="12" fill="#ff0000"/></svg>
<i style="left:299px;top:275px;width:370px;height:1px;background:#ff1414"></i>
<i style="left:605px;top:275px;width:3px;height:1px;background:#000"></i>
<div id="pvbox"></div>
<svg style="left:601px;top:170px" width="11" height="6" viewBox="0 0 11 6"><path d="M0.5 0H10.5L5.5 5Z" fill="#000"/></svg>
<i class="tk" style="left:669px;top:184px"></i><span class="pl" style="left:674px;top:180px">102513.50</span><i class="tk" style="left:669px;top:216px"></i><span class="pl" style="left:674px;top:212px">102309.80</span><i class="tk" style="left:669px;top:248px"></i><span class="pl" style="left:674px;top:244px">102106.10</span><i class="tk" style="left:669px;top:280px"></i><span class="pl" style="left:674px;top:276px">101902.40</span><i class="tk" style="left:669px;top:312px"></i><span class="pl" style="left:674px;top:308px">101698.70</span><i class="tk" style="left:669px;top:344px"></i><span class="pl" style="left:674px;top:340px">101495.00</span><i class="tk" style="left:669px;top:376px"></i><span class="pl" style="left:674px;top:372px">101291.30</span><i class="tk" style="left:669px;top:408px"></i><span class="pl" style="left:674px;top:404px">101087.60</span><i class="tk" style="left:669px;top:440px"></i><span class="pl" style="left:674px;top:436px">100883.90</span><i class="tk" style="left:669px;top:472px"></i><span class="pl" style="left:674px;top:468px">100680.20</span><i class="tk" style="left:669px;top:504px"></i><span class="pl" style="left:674px;top:500px">100476.50</span><i class="tk" style="left:669px;top:536px"></i><span class="pl" style="left:674px;top:532px">100272.80</span>
<i class="tv" style="left:298px;top:569px"></i><span class="tl" style="left:298.5px;top:573px">17 Apr 2026</span><i class="tv" style="left:362px;top:569px"></i><span class="tl" style="left:362.5px;top:573px">17 Apr 08:15</span><i class="tv" style="left:426px;top:569px"></i><span class="tl" style="left:426.5px;top:573px">17 Apr 12:15</span><i class="tv" style="left:490px;top:569px"></i><span class="tl" style="left:490.5px;top:573px">17 Apr 16:15</span><i class="tv" style="left:554px;top:569px"></i><span class="tl" style="left:554.5px;top:573px">17 Apr 20:15</span>
<i style="left:671px;top:270px;width:49px;height:11px;background:#ff1414"></i><span class="pl" style="left:674px;top:271px;color:#fff">101931.31</span>
<div id="panel"></div>
<span class="tab" style="left:745.5px;letter-spacing:-0.2px">General</span><span class="tab" style="left:794px">Mostrar</span><span class="tab" style="left:843.5px;letter-spacing:-0.2px">Colores</span>
<i style="left:844px;top:184px;width:36px;height:2px;background:#0a6fe0"></i>
<span class="lb" style="top:199px">Esquema de colores:</span><div class="cb dis" style="top:196px"><svg class="chv" viewBox="0 0 10 6"><path d="M0.5 0.5L5 5L9.5 0.5" fill="none" stroke="#555" stroke-width="1.35"/></svg></div><span class="lb" style="top:227px">Fondo:</span><div class="cb" style="top:224px"><i class="sw" style="background:#d3d3d1"></i><span class="cv">LightGray</span><svg class="chv" viewBox="0 0 10 6"><path d="M0.5 0.5L5 5L9.5 0.5" fill="none" stroke="#333" stroke-width="1.35"/></svg></div><span class="lb" style="top:254px">Primer plano:</span><div class="cb" style="top:251px"><i class="sw" style="background:#000"></i><span class="cv">Black</span><svg class="chv" viewBox="0 0 10 6"><path d="M0.5 0.5L5 5L9.5 0.5" fill="none" stroke="#333" stroke-width="1.35"/></svg></div><span class="lb" style="top:282px">Cuadrícula:</span><div class="cb" style="top:279px"><i class="sw" style="background:#000"></i><span class="cv">Black</span><svg class="chv" viewBox="0 0 10 6"><path d="M0.5 0.5L5 5L9.5 0.5" fill="none" stroke="#333" stroke-width="1.35"/></svg></div><span class="lb" style="top:310px">Barra arriba:</span><div class="cb" style="top:307px"><i class="sw" style="background:#008000"></i><span class="cv">Green</span><svg class="chv" viewBox="0 0 10 6"><path d="M0.5 0.5L5 5L9.5 0.5" fill="none" stroke="#333" stroke-width="1.35"/></svg></div><span class="lb" style="top:337px">Barra abajo:</span><div class="cb" style="top:334px"><i class="sw" style="background:#ff0000"></i><span class="cv">Red</span><svg class="chv" viewBox="0 0 10 6"><path d="M0.5 0.5L5 5L9.5 0.5" fill="none" stroke="#333" stroke-width="1.35"/></svg></div><span class="lb" style="top:365px">Vela alcista:</span><div class="cb" style="top:362px"><i class="sw" style="background:#008000"></i><span class="cv">Green</span><svg class="chv" viewBox="0 0 10 6"><path d="M0.5 0.5L5 5L9.5 0.5" fill="none" stroke="#333" stroke-width="1.35"/></svg></div><span class="lb" style="top:393px">Vela bajista:</span><div class="cb" style="top:390px"><i class="sw" style="background:#ff0000"></i><span class="cv">Red</span><svg class="chv" viewBox="0 0 10 6"><path d="M0.5 0.5L5 5L9.5 0.5" fill="none" stroke="#333" stroke-width="1.35"/></svg></div><span class="lb" style="top:420px">Línea:</span><div class="cb" style="top:417px"><i class="sw" style="background:#000"></i><span class="cv">Black</span><svg class="chv" viewBox="0 0 10 6"><path d="M0.5 0.5L5 5L9.5 0.5" fill="none" stroke="#333" stroke-width="1.35"/></svg></div><span class="lb" style="top:448px">Volúmenes:</span><div class="cb" style="top:445px"><i class="sw" style="background:#008000"></i><span class="cv">Green</span><svg class="chv" viewBox="0 0 10 6"><path d="M0.5 0.5L5 5L9.5 0.5" fill="none" stroke="#333" stroke-width="1.35"/></svg></div><span class="lb" style="top:475px">Línea Bid:</span><div class="cb" style="top:472px"><i class="sw" style="background:#ff1a1a"></i><span class="cv">Crimson</span><svg class="chv" viewBox="0 0 10 6"><path d="M0.5 0.5L5 5L9.5 0.5" fill="none" stroke="#333" stroke-width="1.35"/></svg></div><span class="lb" style="top:503px">Línea Ask:</span><div class="cb" style="top:500px"><i class="sw" style="background:#ff1a1a"></i><span class="cv">Crimson</span><svg class="chv" viewBox="0 0 10 6"><path d="M0.5 0.5L5 5L9.5 0.5" fill="none" stroke="#333" stroke-width="1.35"/></svg></div><span class="lb" style="top:531px">Línea del último precio:</span><div class="cb" style="top:528px"><i class="sw" style="background:#b00000"></i><span class="cv">Maroon</span><svg class="chv" viewBox="0 0 10 6"><path d="M0.5 0.5L5 5L9.5 0.5" fill="none" stroke="#333" stroke-width="1.35"/></svg></div><span class="lb" style="top:558px">Niveles Stop:</span><div class="cb" style="top:555px"><i class="sw" style="background:#b00000"></i><span class="cv">Maroon</span><svg class="chv" viewBox="0 0 10 6"><path d="M0.5 0.5L5 5L9.5 0.5" fill="none" stroke="#333" stroke-width="1.35"/></svg></div>
<div class="btn" style="left:840px;border:2px solid #0078d7;line-height:17px">Aceptar</div>
<div class="btn" style="left:921px">Cancelar</div>
<div class="btn" style="left:1002px">Ayuda</div>
</div></div>
<div id="taskbar">
<i style="left:100px;top:0;width:48px;height:40px;background:#343434"></i>
<i style="left:55px;top:38px;width:40px;height:2px;background:#76b9ed"></i>
<i style="left:100px;top:38px;width:48px;height:2px;background:#76b9ed"></i>
<i style="left:1361px;top:0;width:1px;height:40px;background:#5a5a5a"></i>
<svg style="left:0;top:0" width="1366" height="40" viewBox="0 728 1366 40">
<path d="M16 742.1L22.9 741.1V747.5H16ZM24 741L32.2 739.8V747.5H24ZM16 748.5H22.9V754.9L16 753.9ZM24 748.5H32.2V756.3L24 755.1Z" fill="#fff"/>
<defs><linearGradient id="gb" x1="0" y1="0" x2="1" y2="0"><stop offset="0" stop-color="#ff5c1c"/><stop offset="1" stop-color="#fb2a06"/></linearGradient></defs>
<path d="M70.2 735.9H80L82.4 738.2L85 739.2L85.4 743.2L84.3 747.1L83 751.7L80.4 756L75.1 760L69.8 756L67.2 751.7L65.9 747.1L64.7 743.2L65.2 739.2L67.9 738.2Z" fill="url(#gb)"/>
<path d="M67.2 743.5L69.2 740.9L72.5 739.9L75.1 740.5L77.7 739.9L81 740.9L82.9 743.5L81.7 747.5L79.4 749.8L80 751.4L75.1 755L70.2 751.4L70.8 749.8L68.5 747.5Z" fill="#fff"/>
<path d="M70.2 742.8L73.8 743.5L73.3 744.6L70.8 744ZM80 742.8L76.4 743.5L76.9 744.6L79.4 744ZM74.1 746.5H76.1L75.1 748.1ZM71.8 749.4L75.1 750.8L78.4 749.4L78.7 750.4L75.1 752.1L71.5 750.4Z" fill="#fc4a18"/>
<defs><linearGradient id="gm" x1="0" y1="0" x2="0" y2="1"><stop offset="0" stop-color="#3490d2"/><stop offset="1" stop-color="#2276b8"/></linearGradient></defs>
<rect x="114.2" y="737.9" width="19.2" height="19.6" rx="3" fill="url(#gm)" stroke="#dcdcdc" stroke-width="1.6"/>
<path d="M119.6 756.4V749.8Q119.6 748.9 120.6 748.9H124Q125 748.7 125 747.2L125.4 742.4Q126 740.2 127.2 740.6Q128 741.4 128.4 743.4L130.2 749L132.8 752.2" fill="none" stroke="#dfe9f2" stroke-width="1.1"/>
<path d="M120.6 741.6Q118.6 741.4 118.8 742.8Q119 743.6 119.8 743.8Q120.8 744.2 120.6 745.2Q120.2 746 118.6 745.6" stroke="#dfe9f2" stroke-width="0.6" fill="none"/>
<path d="M1153 750.8L1159.1 744.6L1165.2 750.8" fill="none" stroke="#fff" stroke-width="1.2"/>
<path d="M1176.2 742.3V744.6M1178.4 742.3V744.6M1175.4 744.8H1179.2V746.4Q1179.2 748.2 1177.3 748.2Q1175.4 748.2 1175.4 746.4ZM1177.3 748.2V752.7H1180" fill="none" stroke="#fff" stroke-width="1"/>
<rect x="1180" y="745.2" width="10.2" height="7.4" fill="none" stroke="#fff" stroke-width="1"/><rect x="1181.2" y="746.4" width="7" height="5" fill="#d0d0d0"/><rect x="1190.6" y="747.2" width="1.2" height="3.4" fill="#fff"/>
<circle cx="1212.6" cy="753.6" r="1.4" fill="#fff"/>
<path d="M1207.8 754.2A5 5 0 0 1 1213.2 749" fill="none" stroke="#fff" stroke-width="1.1"/>
<path d="M1204.8 754.2A8 8 0 0 1 1213.2 746" fill="none" stroke="#e0e0e0" stroke-width="1.1"/>
<path d="M1201.8 754.2A11 11 0 0 1 1213.2 743" fill="none" stroke="#d0d0d0" stroke-width="1.1"/>
<path d="M1223.2 745.6H1225.6L1228.6 742.6V753.6L1225.6 750.6H1223.2Z" fill="none" stroke="#fff" stroke-width="1"/>
<path d="M1230.6 745.6A3.4 3.4 0 0 1 1230.6 750.6" fill="none" stroke="#fff" stroke-width="1"/>
<path d="M1232.6 743.6A6 6 0 0 1 1232.6 752.6" fill="none" stroke="#e0e0e0" stroke-width="1"/>
<path d="M1235 741.6A9 9 0 0 1 1235 754.6" fill="none" stroke="#8a8a8a" stroke-width="1"/>
<path d="M1325 740H1341V753H1335.6V756.4L1332 753H1325Z" fill="#fff"/>
<path d="M1328.2 743.4H1338M1328.2 746.4H1338M1328.2 749.4H1334" stroke="#101010" stroke-width="1.1"/>
<circle cx="1340.6" cy="755.7" r="7.6" fill="#262626" stroke="#686868" stroke-width="1.4"/>
<text x="1340.6" y="760" font-size="12" fill="#fff" stroke="#fff" stroke-width="0.4" text-anchor="middle" font-family="Liberation Sans, sans-serif">3</text>
</svg>
<span style="left:1110px;top:12px;font-size:12px;letter-spacing:0.6px;transform:scaleX(.8);transform-origin:0 0">ES</span>
<span style="left:1252px;top:5px;font-size:12px;letter-spacing:-0.1px">3:30 p. m.</span>
<span style="left:1249px;top:23px;font-size:12px;letter-spacing:-0.2px">17/04/2026</span>
</div>

</body></html>
